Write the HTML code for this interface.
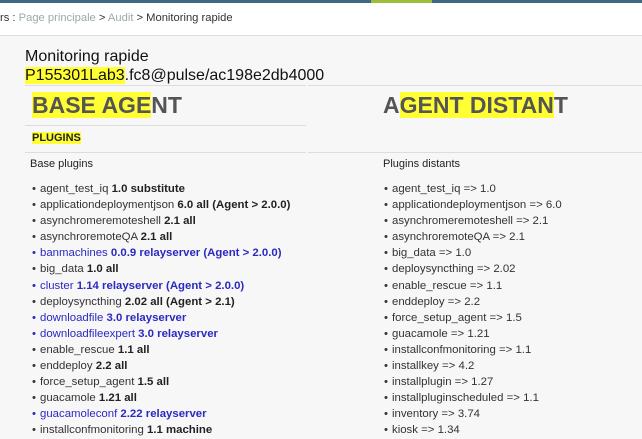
<!DOCTYPE html>
<html><head><meta charset="utf-8"><style>
body{margin:0;width:642px;height:439px;overflow:hidden;background:#f7f7f7;font-family:"Liberation Sans",sans-serif;position:relative}
.top{position:absolute;left:0;top:0;width:642px;height:3px;background:#3d6a80}
.g{position:absolute;top:0;height:3px;left:371px;width:61px;background:#9bbf3a}
.hdr{position:absolute;left:0;top:3px;width:642px;height:32px;background:#fff;border-bottom:1px solid #ddd}
.bc{position:absolute;left:0;top:12px;font-size:11.2px;color:#333}
.bc span{color:#9aa}
.t{position:absolute;left:25px;top:47px;font-size:16px;color:#111;line-height:19px}
.hl{background:#ffff33}
.line{position:absolute;height:1px;background:#ddd}
.h{position:absolute;font-size:23px;font-weight:bold;color:#555;top:92px}
.pl{position:absolute;left:32px;top:132px;font-size:11px;font-weight:bold;color:#222}
.sub{position:absolute;top:158px;font-size:11px;color:#222}
ul{position:absolute;margin:0;padding:0;list-style:none;font-size:11.4px;line-height:16.1px;color:#333}
li:before{content:"•";display:inline-block;width:8px}
b{color:#222}
.bl,.bl b{color:#2a2ac0}
</style></head><body>
<div class="top"></div><div class="g"></div>
<div class="hdr"></div>
<div class="bc">rs : <span>Page principale</span> &gt; <span>Audit</span> &gt; Monitoring rapide</div>
<div class="t">Monitoring rapide<br><span class="hl">P155301Lab3</span>.fc8@pulse/ac198e2db4000</div>
<div class="line" style="left:25px;top:85px;width:281px"></div>
<div class="line" style="left:308px;top:85px;width:334px"></div>
<div class="h" style="left:32px"><span class="hl">BASE AGE</span>NT</div>
<div class="h" style="left:383px">A<span class="hl">GENT DISTAN</span>T</div>
<div class="line" style="left:25px;top:125px;width:281px"></div>
<div class="pl"><span class="hl">PLUGINS</span></div>
<div class="line" style="left:25px;top:152px;width:281px"></div>
<div class="line" style="left:308px;top:152px;width:334px"></div>
<div class="sub" style="left:30px">Base plugins</div>
<div class="sub" style="left:383px">Plugins distants</div>
<ul style="left:32px;top:181px">
<li>agent_test_iq <b>1.0 substitute</b></li>
<li>applicationdeploymentjson <b>6.0 all (Agent &gt; 2.0.0)</b></li>
<li>asynchromeremoteshell <b>2.1 all</b></li>
<li>asynchroremoteQA <b>2.1 all</b></li>
<li class="bl">banmachines <b>0.0.9 relayserver (Agent &gt; 2.0.0)</b></li>
<li>big_data <b>1.0 all</b></li>
<li class="bl">cluster <b>1.14 relayserver (Agent &gt; 2.0.0)</b></li>
<li>deploysyncthing <b>2.02 all (Agent &gt; 2.1)</b></li>
<li class="bl">downloadfile <b>3.0 relayserver</b></li>
<li class="bl">downloadfileexpert <b>3.0 relayserver</b></li>
<li>enable_rescue <b>1.1 all</b></li>
<li>enddeploy <b>2.2 all</b></li>
<li>force_setup_agent <b>1.5 all</b></li>
<li>guacamole <b>1.21 all</b></li>
<li class="bl">guacamoleconf <b>2.22 relayserver</b></li>
<li>installconfmonitoring <b>1.1 machine</b></li>
</ul>
<ul style="left:384px;top:181px">
<li>agent_test_iq =&gt; 1.0</li>
<li>applicationdeploymentjson =&gt; 6.0</li>
<li>asynchromeremoteshell =&gt; 2.1</li>
<li>asynchroremoteQA =&gt; 2.1</li>
<li>big_data =&gt; 1.0</li>
<li>deploysyncthing =&gt; 2.02</li>
<li>enable_rescue =&gt; 1.1</li>
<li>enddeploy =&gt; 2.2</li>
<li>force_setup_agent =&gt; 1.5</li>
<li>guacamole =&gt; 1.21</li>
<li>installconfmonitoring =&gt; 1.1</li>
<li>installkey =&gt; 4.2</li>
<li>installplugin =&gt; 1.27</li>
<li>installpluginscheduled =&gt; 1.1</li>
<li>inventory =&gt; 3.74</li>
<li>kiosk =&gt; 1.34</li>
</ul>
</body></html>
